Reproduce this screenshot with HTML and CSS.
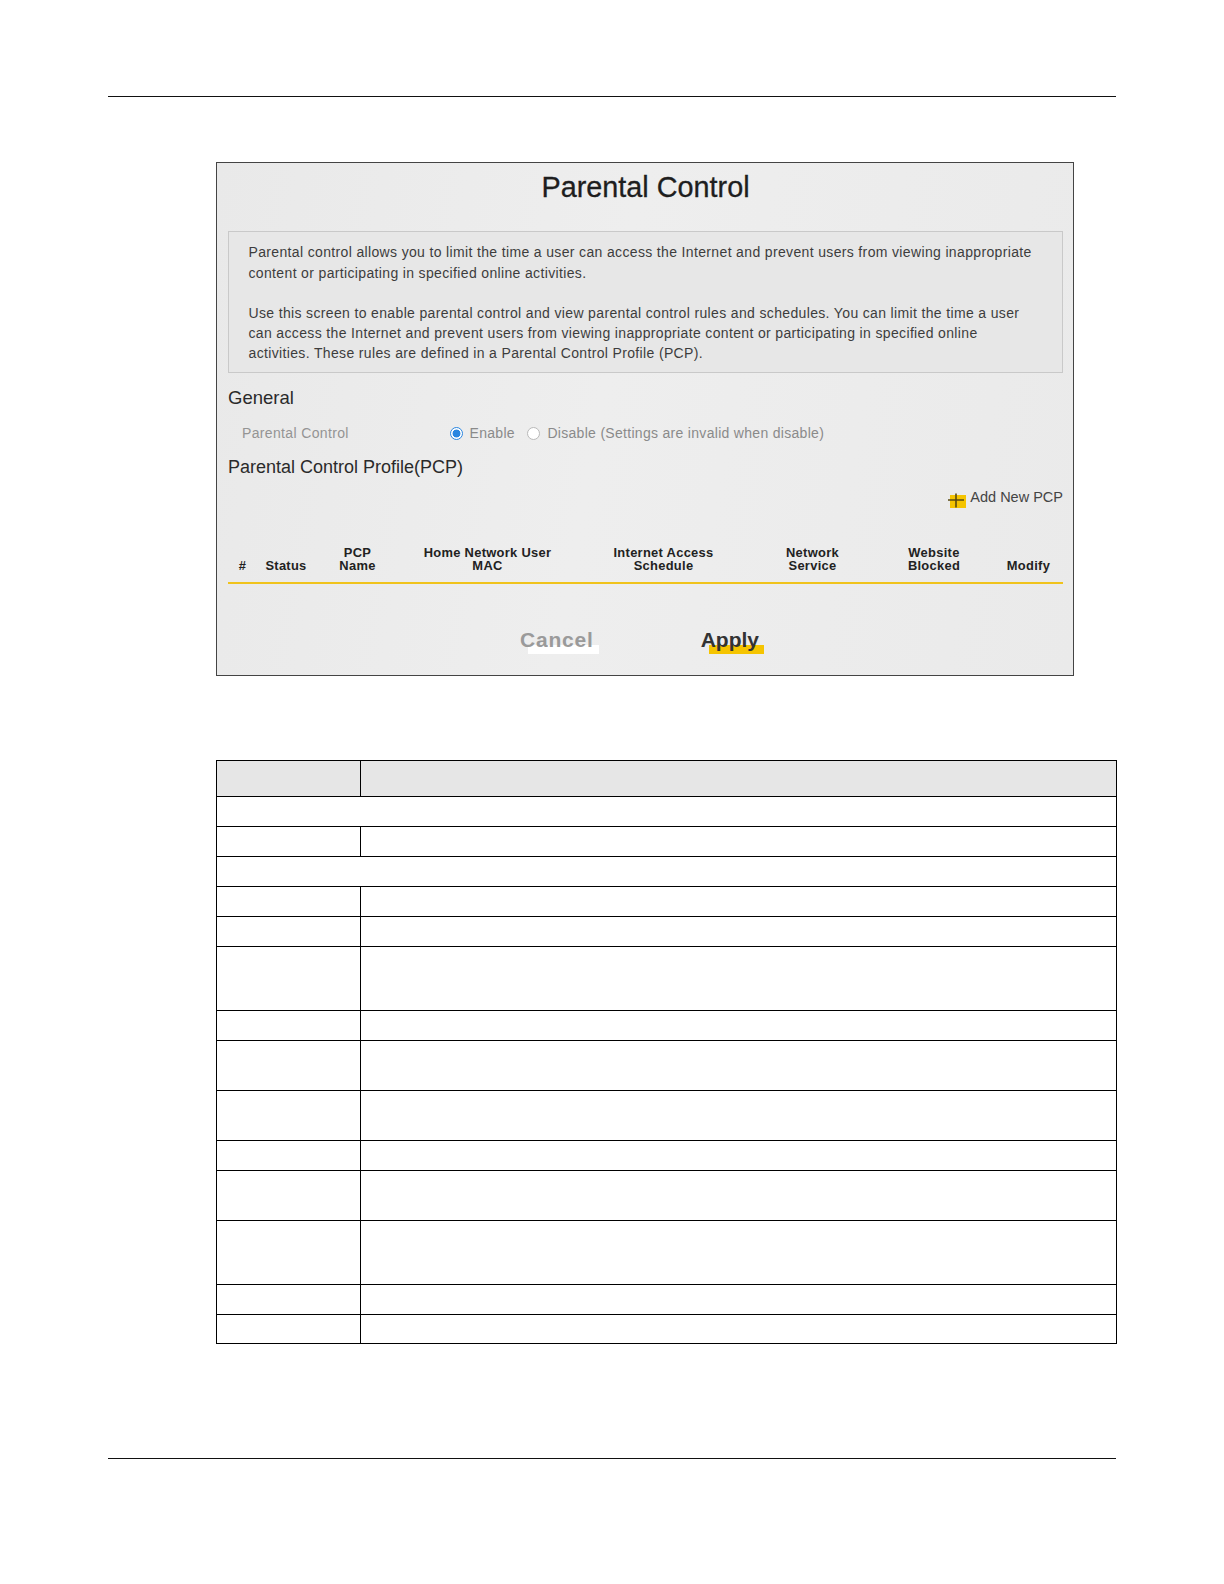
FILE: index.html
```html
<!DOCTYPE html>
<html lang="en">
<head>
<meta charset="utf-8">
<title>Parental Control</title>
<link rel="stylesheet" href="styles.css">
</head>
<body>
<div class="page">
  <div class="rule"></div>

  <div class="shot">
    <h1 class="title">Parental Control</h1>
    <div class="desc">
      <p>Parental control allows you to limit the time a user can access the Internet and prevent users from viewing inappropriate<br>content or participating in specified online activities.</p>
      <p>Use this screen to enable parental control and view parental control rules and schedules. You can limit the time a user<br>can access the Internet and prevent users from viewing inappropriate content or participating in specified online<br>activities. These rules are defined in a Parental Control Profile (PCP).</p>
    </div>

    <h2 class="section">General</h2>
    <div class="field">
      <span class="field-label">Parental Control</span>
      <span class="radio on"></span><span class="opt opt-enable">Enable</span>
      <span class="radio"></span><span class="opt">Disable (Settings are invalid when disable)</span>
    </div>

    <h2 class="section section-pcp">Parental Control Profile(PCP)</h2>
    <div class="add-row">
      <span class="add-icon">
        <svg width="19" height="16" viewBox="0 0 19 16"><rect x="3" y="3" width="16" height="13" fill="#f5c400"/><path d="M1 8H17M9 1.5V15.5" stroke="#5a4a10" stroke-width="1.6" fill="none"/></svg>
      </span>
      <span class="add-text">Add New PCP</span>
    </div>

    <div class="thead">
      <div class="th">#</div>
      <div class="th">Status</div>
      <div class="th">PCP<br>Name</div>
      <div class="th">Home Network User<br>MAC</div>
      <div class="th">Internet Access<br>Schedule</div>
      <div class="th">Network<br>Service</div>
      <div class="th">Website<br>Blocked</div>
      <div class="th">Modify</div>
    </div>

    <div class="buttons">
      <span class="btn btn-cancel">Cancel</span>
      <span class="btn btn-apply">Apply</span>
    </div>
  </div>

  <table class="doc-table">
    <tr class="head h36"><td class="c1"></td><td></td></tr>
    <tr class="h30"><td colspan="2"></td></tr>
    <tr class="h30"><td class="c1"></td><td></td></tr>
    <tr class="h30"><td colspan="2"></td></tr>
    <tr class="h30"><td class="c1"></td><td></td></tr>
    <tr class="h30"><td class="c1"></td><td></td></tr>
    <tr class="h64"><td class="c1"></td><td></td></tr>
    <tr class="h30"><td class="c1"></td><td></td></tr>
    <tr class="h50"><td class="c1"></td><td></td></tr>
    <tr class="h50"><td class="c1"></td><td></td></tr>
    <tr class="h30"><td class="c1"></td><td></td></tr>
    <tr class="h50"><td class="c1"></td><td></td></tr>
    <tr class="h64"><td class="c1"></td><td></td></tr>
    <tr class="h30"><td class="c1"></td><td></td></tr>
    <tr class="h29"><td class="c1"></td><td></td></tr>
  </table>

  <div class="rule rule-bottom"></div>
</div>
</body>
</html>
```

FILE: styles.css
```css
html, body {
  margin: 0;
  padding: 0;
  background: #ffffff;
}

body {
  font-family: "Liberation Sans", Arial, sans-serif;
  color: #222;
}

.page {
  width: 1224px;
  padding-top: 96px;
  display: flex;
  flex-direction: column;
}

.rule {
  margin-left: 108px;
  width: 1008px;
  height: 0;
  border-top: 1px solid #111;
}

.rule-bottom {
  margin-top: 114px;
}

/* ---------- screenshot panel ---------- */
.shot {
  box-sizing: border-box;
  margin-top: 65px;
  margin-left: 216px;
  width: 858px;
  height: 514px;
  border: 1px solid #444;
  background: linear-gradient(100deg, #e9e9e9 0%, #eeeeee 45%, #eaeaea 100%);
  padding: 0 10px 0 11px;
  display: flex;
  flex-direction: column;
}

.title {
  margin: 7px 0 0;
  font-size: 28.8px;
  line-height: 34px;
  font-weight: normal;
  text-align: center;
  color: #1e1e1e;
  -webkit-text-stroke: 0.3px #1e1e1e;
}

.desc {
  margin-top: 27px;
  border: 1px solid #c9c9c9;
  background: #e7e7e7;
  padding: 10.3px 10px 8.5px 19.5px;
  font-size: 14px;
  letter-spacing: 0.35px;
  line-height: 20.2px;
  color: #3d3d3d;
  white-space: nowrap;
}

.desc p {
  margin: 0;
}

.desc p + p {
  margin-top: 20.2px;
}

.section {
  margin: 13px 0 0;
  font-size: 18.5px;
  line-height: 24px;
  font-weight: normal;
  color: #2a2a2a;
}

.section-pcp {
  margin-top: 11.7px;
  font-size: 18px;
}

.field {
  margin-top: 13px;
  display: flex;
  align-items: center;
  height: 20px;
  padding-left: 14px;
  font-size: 14px;
  color: #8a8a8a;
}

.field-label {
  width: 208px;
  letter-spacing: 0.35px;
  color: #949494;
}

.radio {
  box-sizing: border-box;
  width: 13px;
  height: 13px;
  border-radius: 50%;
  border: 1px solid #b9b9b9;
  background: #fff;
  margin-right: 7px;
  flex: none;
}

.radio.on {
  margin-right: 6.5px;
  border: 1.5px solid #2a86e0;
  background: radial-gradient(circle, #2a86e0 0 3.6px, #ffffff 4.3px);
}

.opt-enable {
  margin-right: 12.5px;
}

.opt {
  letter-spacing: 0.3px;
}

.add-row {
  margin-top: 8.3px;
  display: flex;
  justify-content: flex-end;
  align-items: center;
  height: 20px;
  gap: 4px;
  font-size: 14.5px;
  color: #444;
}

.add-icon {
  display: flex;
  margin-top: 6px;
}

.thead {
  margin-top: 39px;
  display: grid;
  grid-template-columns: 29px 58px 85px 175px 177px 121px 122px 67px;
  align-items: end;
  padding-bottom: 10px;
  border-bottom: 2px solid #f0c31c;
}

.th {
  text-align: center;
  font-size: 12.9px;
  line-height: 13.1px;
  font-weight: bold;
  color: #222;
  letter-spacing: 0.3px;
}

.buttons {
  margin-top: 43.5px;
  display: flex;
  justify-content: center;
  gap: 107px;
  padding-right: 12px;
}

.btn {
  position: relative;
  z-index: 0;
  font-size: 21px;
  line-height: 24px;
  font-weight: bold;
}

.btn::after {
  content: "";
  position: absolute;
  z-index: -1;
  left: 8px;
  right: -5px;
  top: 17px;
  height: 9px;
}

.btn-cancel {
  color: #9a9a9a;
  letter-spacing: 0.8px;
}

.btn-cancel::after {
  background: #ffffff;
}

.btn-apply {
  color: #333;
}

.btn-apply::after {
  background: #f5c400;
}

/* ---------- document table ---------- */
.doc-table {
  margin-top: 84px;
  margin-left: 216px;
  width: 901px;
  border-collapse: collapse;
}

.doc-table td {
  border: 1px solid #000;
  padding: 0;
}

.doc-table .c1 {
  width: 143px;
}

.doc-table .head td {
  background: #e6e6e6;
}

.h29 { height: 29px; }
.h30 { height: 30px; }
.h36 { height: 36px; }
.h50 { height: 50px; }
.h64 { height: 64px; }
```
